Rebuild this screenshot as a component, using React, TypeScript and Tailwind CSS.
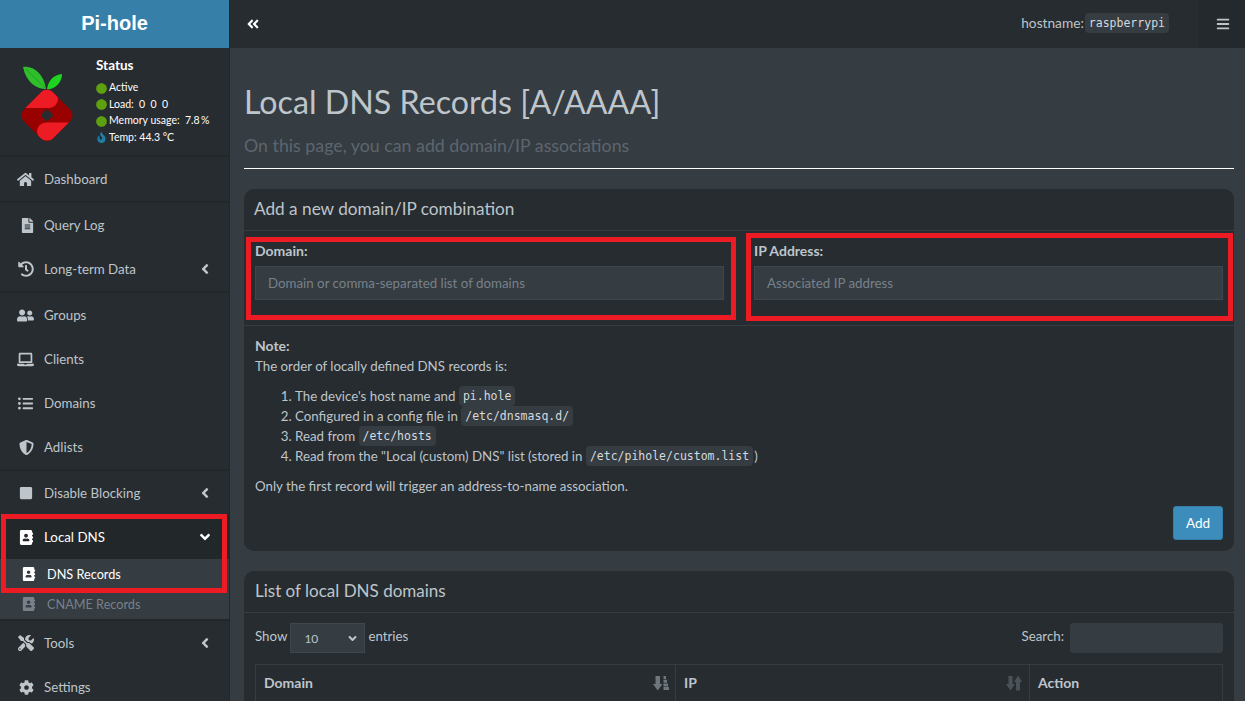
import type { ReactNode } from "react";
import {
  FaAddressBook,
  FaAngleDoubleLeft,
  FaAngleDown,
  FaAngleLeft,
  FaBars,
  FaCircle,
  FaCog,
  FaFileAlt,
  FaFire,
  FaHistory,
  FaHome,
  FaLaptop,
  FaListUl,
  FaShieldAlt,
  FaStop,
  FaTools,
  FaUserFriends,
} from "react-icons/fa";

const Logo = () => (
  <svg viewBox="20 60 56 82" className="h-[82px] w-[56px] shrink-0">
    <defs>
      <clipPath id="berry">
        <rect x="26.500" y="92.800" width="41" height="41" rx="8" transform="rotate(45 47 113.300)" />
      </clipPath>
    </defs>
    <path d="M23 65 C33 63 44 72 46 87 C36 87 26 80 23 65Z" fill="#2fbf2a" />
    <path d="M26 67 L45 86" stroke="#1a8f1a" strokeWidth="0.6" />
    <path d="M62 72 C62 80 56 87 47 87.500 C48 78 54 73 62 72Z" fill="#1fd41f" />
    <g clipPath="url(#berry)">
      <rect x="20" y="85" width="55" height="56" fill="#990000" />
      <path d="M18 97 H49" stroke="#ed1c24" strokeWidth="18" strokeLinecap="round" />
      <path d="M46 129.500 H80" stroke="#ed1c24" strokeWidth="18" strokeLinecap="round" />
    </g>
    <rect x="42.400" y="108.700" width="9.200" height="9.200" rx="1.500" transform="rotate(45 47 113.300)" fill="#272c30" />
  </svg>
);

const StatusRow = ({ icon, children }: { icon: ReactNode; children: ReactNode }) => (
  <div className="flex h-[16.500px] items-center gap-[2px] text-[10.500px] text-white">
    {icon}
    <span>{children}</span>
  </div>
);

const NavItem = ({
  icon,
  label,
  arrow,
  active,
  line,
}: {
  icon: ReactNode;
  label: string;
  arrow?: "left" | "down";
  active?: boolean;
  line?: boolean;
}) => (
  <div
    className={`box-content flex h-[44px] shrink-0 items-center pl-[17px] pr-[16px] text-[13.300px] ${active ? "bg-[#22272a] text-white" : "text-[#bec5cb]"} ${line ? "border-t-2 border-[#22272a]" : ""}`}
  >
    <span className="flex w-[27px] shrink-0 text-[17px]">{icon}</span>
    <span className="mt-[2px] flex-1">{label}</span>
    {arrow === "left" && <FaAngleLeft className="text-[16px]" />}
    {arrow === "down" && <FaAngleDown className="text-[16px] text-white" />}
  </div>
);

const SubItem = ({ label, active }: { label: string; active?: boolean }) => (
  <div
    className={`flex h-[30px] shrink-0 items-center bg-[#353c42] pl-[22px] text-[12.700px] ${active ? "text-white" : "text-[#78818a]"}`}
  >
    <FaAddressBook className="mr-[11px] text-[14px]" />
    <span className="mt-[2px]">{label}</span>
  </div>
);

const Sidebar = () => (
  <aside className="flex w-[230px] shrink-0 flex-col border-r border-[#22272a] bg-[#272c30]">
    <div className="flex h-[48px] shrink-0 items-center justify-center bg-[#367fa9] pb-[2px] text-[20px] font-bold text-white [font-family:'Liberation_Sans',sans-serif]">
      Pi-hole
    </div>
    <div className="flex h-[107px] shrink-0 pl-[20px] pt-[9px]">
      <div className="mt-[5px]">
        <Logo />
      </div>
      <div className="ml-[20px]">
        <div className="mb-[7px] text-[13.500px] font-bold leading-[16px] text-white">Status</div>
        <StatusRow icon={<FaCircle className="text-[11px] text-[#5da10f]" />}>Active</StatusRow>
        <StatusRow icon={<FaCircle className="text-[11px] text-[#5da10f]" />}>Load:&nbsp; 0&nbsp; 0&nbsp; 0</StatusRow>
        <StatusRow icon={<FaCircle className="text-[11px] text-[#5da10f]" />}>Memory usage:&nbsp; 7.8&thinsp;%</StatusRow>
        <StatusRow icon={<FaFire className="text-[11px] text-[#1d7ea6]" />}>Temp: 44.3 °C</StatusRow>
      </div>
    </div>
    <NavItem line icon={<FaHome />} label="Dashboard" />
    <NavItem line icon={<FaFileAlt className="ml-[3px] text-[15px]" />} label="Query Log" />
    <NavItem icon={<FaHistory className="ml-[1px] text-[16px]" />} label="Long-term Data" arrow="left" />
    <NavItem line icon={<FaUserFriends />} label="Groups" />
    <NavItem icon={<FaLaptop />} label="Clients" />
    <NavItem icon={<FaListUl className="ml-[1px] text-[15px]" />} label="Domains" />
    <NavItem icon={<FaShieldAlt className="ml-[2px] text-[15px]" />} label="Adlists" />
    <NavItem line icon={<FaStop className="ml-[2px] text-[14px]" />} label="Disable Blocking" arrow="left" />
    <NavItem active icon={<FaAddressBook className="ml-[2px] text-[15px]" />} label="Local DNS" arrow="down" />
    <SubItem active label="DNS Records" />
    <SubItem label="CNAME Records" />
    <NavItem line icon={<FaTools className="ml-[1px] text-[16px]" />} label="Tools" arrow="left" />
    <NavItem icon={<FaCog className="ml-[2px] text-[15px]" />} label="Settings" />
  </aside>
);

const Code = ({ children }: { children: ReactNode }) => (
  <code className="inline-block h-[20px] rounded-[4px] bg-[#353c42] px-[4px] align-top text-[11.500px] leading-[20px] text-[#d5dade] [font-family:'DejaVu_Sans_Mono',monospace]">
    {children}
  </code>
);

const Field = ({ label, placeholder }: { label: string; placeholder: string }) => (
  <div className="flex-1">
    <div className="mb-[5px] text-sm font-bold leading-[20px] text-[#bec5cb]">{label}</div>
    <div className="flex h-[34px] items-center border border-[#3f464d] bg-[#353c42] pl-3 pt-[2px] text-[13.300px] text-[#78818a]">
      {placeholder}
    </div>
  </div>
);

const SortIcon = ({ bright }: { bright?: boolean }) => (
  <svg viewBox="0 0 16 16" className="h-[16px] w-[16px]" fill={bright ? "#6f777e" : "#4a5158"}>
    {bright ? (
      <path d="M2.500 1h4.500v8h2.500l-4.750 6.500L0 9h2.500zM10.500 1h2.500v3h-2.500zM10.500 4.700h3.500v3h-3.500zM10.500 8.400h4.500v3h-4.500zM10.500 12.100h5.500v3h-5.500z" />
    ) : (
      <path d="M2.500 1h4v8H9l-4.500 6.500L0 9h2.500zM10 15.500h4V7h2L12 .5 8 7h2z" />
    )}
  </svg>
);

export default function App() {
  return (
    <div className="relative flex h-[701px] w-[1245px] overflow-hidden bg-[#353c42] text-[13.300px] text-[#bec5cb] [font-family:Lato,sans-serif]">
      <Sidebar />
      <div className="flex min-w-0 flex-1 flex-col">
        <header className="flex h-[48px] shrink-0 items-center bg-[#272c30]">
          <FaAngleDoubleLeft className="mb-[1px] ml-[16px] text-[14px] text-white" />
          <div className="mb-[1px] ml-auto mr-[30px] flex items-center gap-[1px] text-[13.700px]">
            <span>hostname:</span>
            <Code>raspberrypi</Code>
          </div>
          <div className="flex h-full w-[46px] items-center justify-center bg-[#24292d] pl-[2px]">
            <FaBars className="text-[14px]" />
          </div>
        </header>
        <main className="pl-[14px] pr-[11px] pt-[32px]">
          <h1 className="text-[32.200px] font-normal leading-[44px]">Local DNS Records [A/AAAA]</h1>
          <div className="mt-[9px] text-[17.800px] leading-[24px] text-[#5d666e]">
            On this page, you can add domain/IP associations
          </div>
          <hr className="mt-[11px] border-white" />
          <section className="mt-[20px] h-[362px] rounded-[10px] bg-[#272c30]">
            <div className="flex h-[42px] items-center border-b border-[#353c42] px-[10px] pb-[2px] text-[17.200px]">
              Add a new domain/IP combination
            </div>
            <div className="flex h-[95px] gap-[30px] border-b border-[#353c42] px-[11px] pt-[10px]">
              <Field label="Domain:" placeholder="Domain or comma-separated list of domains" />
              <Field label="IP Address:" placeholder="Associated IP address" />
            </div>
            <div className="px-[11px] pt-[10px] leading-[20px]">
              <div className="text-sm font-bold">Note:</div>
              <div>The order of locally defined DNS records is:</div>
              <ol className="mt-[10px] list-decimal pl-[40px]">
                <li className="h-[20px]">
                  The device's host name and <Code>pi.hole</Code>
                </li>
                <li className="h-[20px]">
                  Configured in a config file in <Code>/etc/dnsmasq.d/</Code>
                </li>
                <li className="h-[20px]">
                  Read from <Code>/etc/hosts</Code>
                </li>
                <li className="h-[20px]">
                  Read from the "Local (custom) DNS" list (stored in <Code>/etc/pihole/custom.list</Code>
                  <span className="ml-[1px]">)</span>
                </li>
              </ol>
              <div className="mt-[10px]">Only the first record will trigger an address-to-name association.</div>
              <div className="mt-[10px] flex justify-end">
                <button className="h-[34px] w-[50px] rounded-[3px] border border-[#367fa9] bg-[#3c8dbc] text-[13.500px] text-white">
                  Add
                </button>
              </div>
            </div>
          </section>
          <section className="mt-[20px] h-[200px] rounded-[10px] bg-[#272c30]">
            <div className="flex h-[42px] items-center border-b border-[#353c42] px-[11px] pb-[2px] text-[17px]">
              List of local DNS domains
            </div>
            <div className="flex items-center px-[11px] pt-[10px]">
              <span className="mb-[3px]">Show</span>
              <div className="mx-[3px] flex h-[30px] w-[75px] items-center justify-between border border-[#3f464d] bg-[#353c42] pl-[13px] pr-[5px] text-xs">
                <span className="mt-[2px]">10</span>
                <FaAngleDown className="text-[13px]" />
              </div>
              <span className="mb-[3px]">entries</span>
              <span className="mb-[3px] ml-auto mr-[6px]">Search:</span>
              <div className="h-[30px] w-[153px] rounded-[3px] bg-[#353c42]" />
            </div>
            <div className="mx-[11px] mt-[11px] flex h-[40px] border border-[#353c42] text-sm font-bold">
              <div className="flex w-[420px] items-center justify-between border-r border-[#353c42] pb-[2px] pl-2 pr-[6px]">
                Domain
                <SortIcon bright />
              </div>
              <div className="flex w-[354px] items-center justify-between border-r border-[#353c42] pb-[2px] pl-2 pr-[7px]">
                IP
                <SortIcon />
              </div>
              <div className="flex flex-1 items-center pb-[2px] pl-2">Action</div>
            </div>
          </section>
        </main>
      </div>
      {/* annotation boxes from the screenshot */}
      <div className="absolute left-[1px] top-[514px] h-[79px] w-[226px] border-[5px] border-[#ed1c24]" />
      <div className="absolute left-[246px] top-[237px] h-[83px] w-[490px] border-[5px] border-[#ed1c24]" />
      <div className="absolute left-[746px] top-[233px] h-[88px] w-[487px] border-[5px] border-[#ed1c24]" />
    </div>
  );
}
